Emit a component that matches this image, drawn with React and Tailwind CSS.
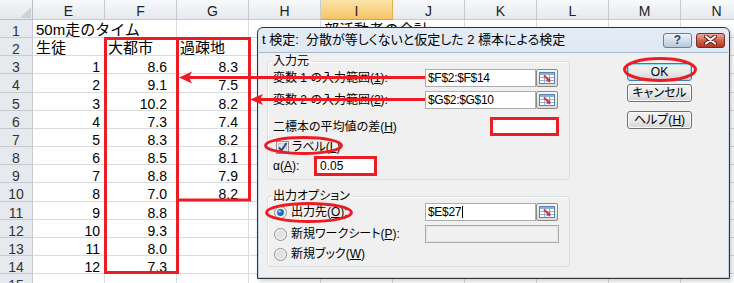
import React from 'react';

const COLS = ['E', 'F', 'G', 'H', 'I', 'J', 'K', 'L', 'M', 'N'];

// Excel の行の高さ (18px と 19px が混ざる)
const ROW_H = [
  'h-[18px]', 'h-[18px]', 'h-[18px]', 'h-[19px]', 'h-[18px]',
  'h-[18px]', 'h-[18px]', 'h-[18px]', 'h-[18px]', 'h-[19px]',
  'h-[18px]', 'h-[18px]', 'h-[18px]', 'h-[18px]', 'h-[18px]',
];

const city = [8.6, 9.1, 10.2, 7.3, 8.3, 8.5, 8.8, 7.0, 8.8, 9.3, 8.0, 7.3];
const rural = [8.3, 7.5, 8.2, 7.4, 8.2, 8.1, 7.9, 8.2];

function buildRows() {
  const rows = [];
  for (let n = 1; n <= 15; n++) {
    const cells = {};
    if (n === 1) {
      cells.E = { t: '50m走のタイム', jp: true, over: true };
      cells.I = { t: '部活動者の合計', jp: true, over: true };
    } else if (n === 2) {
      cells.E = { t: '生徒', jp: true };
      cells.F = { t: '大都市', jp: true };
      cells.G = { t: '過疎地', jp: true };
    } else if (n <= 14) {
      const i = n - 3;
      cells.E = { t: String(i + 1), pr: 'pr-[4px]' };
      cells.F = { t: city[i].toFixed(1), pr: 'pr-[9px]' };
      if (i < rural.length) cells.G = { t: rural[i].toFixed(1), pr: 'pr-[10px]' };
    }
    rows.push({ n, cells });
  }
  return rows;
}

function Cell({ cell, h }) {
  const border = cell?.over ? 'border-b' : 'border-b border-r';
  let text = null;
  if (cell) {
    text = cell.jp ? (
      <div className="whitespace-nowrap pl-[3px] pt-[3px] text-[15px] leading-[14px]">{cell.t}</div>
    ) : (
      <div className={`text-right pt-[4px] text-[14px] leading-[14px] ${cell.pr}`}>{cell.t}</div>
    );
  }
  return (
    <div className={`${h} w-[72px] shrink-0 ${border} border-[#dadcdd] overflow-visible`}>
      {text}
    </div>
  );
}

function Sheet() {
  const rows = buildRows();
  return (
    <div className="flex flex-col">
      <div className="flex h-[20px]">
        <div className="w-[33px] shrink-0 relative border-r border-b border-[#b9bfc7] bg-gradient-to-b from-[#f4f6f8] to-[#e3e7ec]">
          <svg className="absolute right-[1px] bottom-[1px]" width="11" height="11" viewBox="0 0 11 11">
            <polygon points="11,0 11,11 0,11" fill="#cdd2d8" />
          </svg>
        </div>
        {COLS.map((c) => (
          <div
            key={c}
            className={
              c === 'I'
                ? 'w-[72px] shrink-0 border-r border-b border-r-[#e6b04e] border-b-[#f29436] bg-gradient-to-b from-[#fbe4a8] to-[#f4c463] text-center text-[14px] leading-[16px] pt-[3px] text-[#222]'
                : 'w-[72px] shrink-0 border-r border-b border-[#c6cbd2] bg-gradient-to-b from-[#f8f9fb] to-[#e5e9ee] text-center text-[14px] leading-[16px] pt-[3px] text-[#222]'
            }
          >
            {c}
          </div>
        ))}
      </div>
      {rows.map((r, idx) => (
        <div key={r.n} className="flex">
          <div className={`${ROW_H[idx]} w-[33px] shrink-0 border-r border-b border-[#c6cbd2] bg-[#e6e9ee] text-center text-[14px] leading-[14px] pt-[4px] text-[#333]`}>
            {r.n}
          </div>
          {COLS.map((c) => (
            <Cell key={c} cell={r.cells[c]} h={ROW_H[idx]} />
          ))}
        </div>
      ))}
    </div>
  );
}

function RefButton() {
  return (
    <div className="w-[22px] h-[18px] shrink-0 flex items-center justify-center rounded-[2px] border border-[#8a8a8a] bg-gradient-to-b from-[#f6f6f6] to-[#dcdcdc]">
      <svg width="16" height="12" viewBox="0 0 16 12">
        <rect x="0.5" y="0.5" width="15" height="11" fill="#fff" stroke="#5a7fb5" />
        <rect x="1" y="1" width="14" height="2" fill="#8fb0dc" />
        <path d="M1 5.5h14M1 8.5h14M5.5 3v8.5M10.5 3v8.5" stroke="#8fb0dc" strokeWidth="1" />
        <path d="M5 3.5 L10 8.5" stroke="#d8332a" strokeWidth="2" />
        <polygon points="11.5,10 7,9.5 11,5.5" fill="#d8332a" />
      </svg>
    </div>
  );
}

function Field({ children }) {
  return (
    <div className="w-[111px] h-[18px] shrink-0 border border-[#abadb3] bg-white pl-[2px] text-[12px] leading-[16px] tracking-[-0.3px] whitespace-nowrap">
      {children}
    </div>
  );
}

function Checkbox() {
  return (
    <svg width="13" height="13" viewBox="0 0 13 13" className="shrink-0">
      <rect x="0.5" y="0.5" width="12" height="12" fill="#f2f2f2" stroke="#8f8f8f" />
      <rect x="2.5" y="2.5" width="8" height="8" fill="#e0e0e0" stroke="#c9c9c9" />
      <path d="M3 6.5 L5.5 9.5 L10.5 2" stroke="#23499c" strokeWidth="2" fill="none" />
    </svg>
  );
}

function Radio({ on }) {
  return (
    <svg width="13" height="13" viewBox="0 0 13 13" className="shrink-0">
      <circle cx="6.5" cy="6.5" r="6" fill="#f3f3f3" stroke="#8f8f8f" />
      <circle cx="6.5" cy="6.5" r="4.2" fill="#e1e1e1" />
      {on && <circle cx="6.5" cy="6.5" r="3.4" fill="#1c6cbf" />}
      {on && <circle cx="5.6" cy="5.4" r="1.3" fill="#8fd0f7" />}
    </svg>
  );
}

function Btn({ children, def }) {
  return (
    <div
      className={
        def
          ? 'w-[65px] h-[18px] rounded-[3px] border border-[#3c7fb1] shadow-[inset_0_0_0_1px_#8fdaf7] bg-gradient-to-b from-[#f2f2f2] via-[#ebebeb] to-[#d4d4d4] flex items-center justify-center text-[12px] leading-[14px]'
          : 'w-[65px] h-[18px] rounded-[3px] border border-[#707070] shadow-[inset_0_0_0_1px_#fcfcfc] bg-gradient-to-b from-[#f2f2f2] via-[#ebebeb] to-[#d4d4d4] flex items-center justify-center text-[12px] leading-[14px]'
      }
    >
      {children}
    </div>
  );
}

const U = ({ children }) => <span className="underline underline-offset-[1px]">{children}</span>;

function Dialog() {
  return (
    <div className="absolute left-[257px] top-[27px] w-[473px] h-[252px] flex flex-col rounded-t-[6px] border border-[#2e343b] bg-gradient-to-b from-[#e3ebf5] via-[#d2dfed] to-[#bdd3ea] px-[1px] pb-[1px] shadow-[2px_2px_5px_rgba(0,0,0,0.2)]">
      <div className="h-[24px] shrink-0 flex items-center pl-[3px] pr-[3px]">
        <span className="text-[13px] leading-[16px] whitespace-pre [font-feature-settings:'palt']">t 検定:  分散が等しくないと仮定した 2 標本による検定</span>
        <div className="ml-auto flex items-center gap-[4px]">
          <div className="w-[29px] h-[15px] rounded-[3px] border border-[#6d7f94] bg-gradient-to-b from-[#eef3f8] via-[#d3dfeb] to-[#b7c8db] flex items-center justify-center text-[12px] leading-[12px] font-bold text-[#34465a]">
            ?
          </div>
          <div className="w-[29px] h-[15px] rounded-[3px] border border-[#7a2a22] bg-gradient-to-b from-[#e9a99c] via-[#d0634f] to-[#b8321f] flex items-center justify-center">
            <svg width="13" height="10" viewBox="0 0 13 10">
              <path d="M2 1.5 L11 8.5 M11 1.5 L2 8.5" stroke="#5a1a12" strokeWidth="4" strokeLinecap="round" />
              <path d="M2 1.5 L11 8.5 M11 1.5 L2 8.5" stroke="#fff" strokeWidth="2.2" strokeLinecap="round" />
            </svg>
          </div>
        </div>
      </div>

      <div className="flex-1 flex bg-[#f0f0f0] border-t border-[#a3b6ca] pl-[8px] pt-[1px] text-[12px] leading-[14px] [font-feature-settings:'palt']">
        <div className="w-[303px] shrink-0 flex flex-col">
          <fieldset className="border border-[#d5dfe5] rounded-[3px] px-[5px] pb-[3px] shadow-[inset_1px_1px_0_#fff]">
            <legend className="ml-[-2px] px-[2px] leading-[14px]">入力元</legend>
            <div className="flex items-center h-[18px] mt-[1px]">
              <span className="w-[152px] shrink-0">変数 1 の入力範囲(<U>1</U>):</span>
              <Field>$F$2:$F$14</Field>
              <RefButton />
            </div>
            <div className="flex items-center h-[18px] mt-[4px]">
              <span className="w-[152px] shrink-0">変数 2 の入力範囲(<U>2</U>):</span>
              <Field>$G$2:$G$10</Field>
              <RefButton />
            </div>
            <div className="flex items-center h-[19px] mt-[8px]">
              <span className="w-[217px] shrink-0">二標本の平均値の差(<U>H</U>)</span>
              <div className="w-[69px] h-[19px] border-[3px] border-[#ed1c24] bg-white" />
            </div>
            <div className="flex items-center h-[16px] mt-[3px] pl-[3px] gap-[3px]">
              <Checkbox />
              <span>ラベル(<U>L</U>)</span>
            </div>
            <div className="flex items-center h-[20px] mt-[1px]">
              <span className="w-[41px] shrink-0">α(<U>A</U>):</span>
              <div className="w-[63px] h-[20px] border-[3px] border-[#ed1c24] bg-white pl-[3px] leading-[14px] text-[12px]">0.05</div>
            </div>
          </fieldset>

          <fieldset className="mt-[9px] border border-[#d5dfe5] rounded-[3px] px-[5px] pb-[3px] shadow-[inset_1px_1px_0_#fff]">
            <legend className="ml-[-2px] px-[2px] leading-[14px]">出力オプション</legend>
            <div className="flex items-center h-[18px]">
              <span className="w-[152px] shrink-0 flex items-center gap-[4px] pl-[1px]">
                <Radio on />
                <span>出力先(<U>O</U>):</span>
              </span>
              <Field>
                $E$27<span className="inline-block w-px h-[12px] bg-black align-[-2px] ml-[1px]" />
              </Field>
              <RefButton />
            </div>
            <div className="flex items-center h-[18px] mt-[4px]">
              <span className="w-[152px] shrink-0 flex items-center gap-[4px] pl-[1px]">
                <Radio />
                <span>新規ワークシート(<U>P</U>):</span>
              </span>
              <div className="w-[134px] h-[18px] border border-[#a9acb0] bg-[#f0f0f0] shadow-[inset_0_0_0_1px_#e6e6e6]" />
            </div>
            <div className="flex items-center h-[18px] mt-[2px]">
              <span className="flex items-center gap-[4px] pl-[1px]">
                <Radio />
                <span>新規ブック(<U>W</U>)</span>
              </span>
            </div>
          </fieldset>
        </div>

        <div className="ml-[57px] pt-[9px] flex flex-col">
          <Btn def>OK</Btn>
          <div className="mt-[3px]">
            <Btn>キャンセル</Btn>
          </div>
          <div className="mt-[9px]">
            <Btn>
              ヘルプ(<U>H</U>)
            </Btn>
          </div>
        </div>
      </div>
    </div>
  );
}

function Marks() {
  return (
    <svg className="absolute inset-0 pointer-events-none" width="734" height="283" viewBox="0 0 734 283">
      <g fill="none" stroke="#ed1c24" strokeWidth="3">
        <rect x="105.5" y="38.5" width="72" height="234" />
        <rect x="177.5" y="38.5" width="72" height="161.5" />
        <ellipse cx="660" cy="69.5" rx="35.5" ry="11" />
        <ellipse cx="303.5" cy="145.5" rx="38" ry="8" />
        <ellipse cx="309" cy="212.5" rx="42.5" ry="9" />
      </g>
      <g fill="#ed1c24">
        <rect x="189" y="76" width="236" height="3" />
        <polygon points="179,77.5 192,71.5 189,77.5 192,83.5" />
        <rect x="260" y="98" width="165" height="3" />
        <polygon points="250,99.5 263,94 260,99.5 263,105" />
      </g>
    </svg>
  );
}

export default function App() {
  return (
    <div className="relative w-[734px] h-[283px] overflow-hidden bg-white text-black font-['Liberation_Sans','Noto_Sans_CJK_JP',sans-serif]">
      <Sheet />
      <Dialog />
      <Marks />
    </div>
  );
}
